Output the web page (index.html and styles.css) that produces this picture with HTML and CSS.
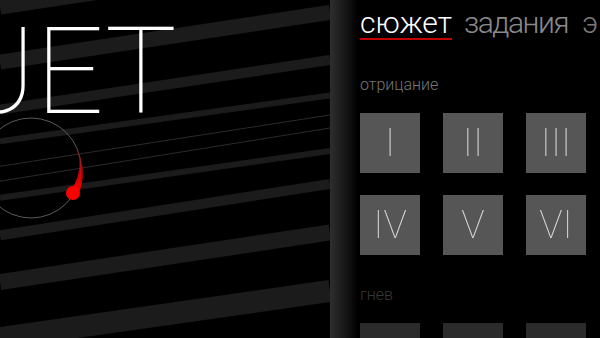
FILE: index.html
```html
<!DOCTYPE html>
<html lang="ru">
<head>
    <meta charset="UTF-8">
    <meta name="viewport" content="width=device-width, initial-scale=1.0">
    <title>Duet - меню</title>
    <link rel="stylesheet" href="styles.css">
</head>
<body>
    <div class="screen">
        <div class="scene">
            <svg class="backdrop" width="330" height="338" viewBox="0 0 330 338">
                <defs>
                    <linearGradient id="trail" gradientUnits="userSpaceOnUse" x1="0" y1="196" x2="0" y2="146">
                        <stop offset="0" stop-color="#ff0000"/>
                        <stop offset="0.5" stop-color="#e00000" stop-opacity="0.85"/>
                        <stop offset="1" stop-color="#800000" stop-opacity="0.2"/>
                    </linearGradient>
                </defs>
                <g stroke="#1b1b1b">
                    <line x1="0" y1="7" x2="330" y2="-42.5" stroke-width="15"/>
                    <line x1="0" y1="62" x2="330" y2="12.5" stroke-width="15"/>
                    <line x1="0" y1="109.5" x2="330" y2="60" stroke-width="10"/>
                    <line x1="0" y1="141.3" x2="330" y2="95.5" stroke-width="6"/>
                    <line x1="0" y1="197.8" x2="330" y2="151" stroke-width="6"/>
                    <line x1="0" y1="235.3" x2="330" y2="184" stroke-width="10"/>
                    <line x1="0" y1="282" x2="330" y2="232.5" stroke-width="16"/>
                    <line x1="0" y1="338" x2="330" y2="291" stroke-width="22"/>
                </g>
                <g stroke="#2a2a2a" stroke-width="1">
                    <line x1="0" y1="166.3" x2="330" y2="115"/>
                    <line x1="0" y1="181.2" x2="330" y2="128"/>
                </g>
                <circle cx="31" cy="168" r="50" fill="none" stroke="#5a5a5a" stroke-width="1"/>
                <path fill="url(#trail)" d="M77.7 196.1 L81.3 186.3 L82.7 177.1 L82.75 168 L81.2 159.1 L78.5 150.7 L76 146.1 L77.5 151.1 L79.3 159.5 L79.25 168 L77.8 176.3 L74.7 183.9 L70 191.4 Z"/>
                <circle cx="73" cy="193" r="7" fill="#ff0000"/>
            </svg>
            <div class="logo">DUET</div>
        </div>

        <div class="panel">
            <nav class="tabs">
                <span class="tab active">сюжет</span>
                <span class="tab">задания</span>
                <span class="tab">эндлесс</span>
            </nav>

            <section class="chapter">
                <div class="chapter-name">отрицание</div>
                <div class="levels">
                    <div class="level">I</div>
                    <div class="level">II</div>
                    <div class="level">III</div>
                    <div class="level">IV</div>
                    <div class="level">V</div>
                    <div class="level">VI</div>
                </div>
            </section>

            <section class="chapter locked">
                <div class="chapter-name">гнев</div>
                <div class="levels">
                    <div class="level"></div>
                    <div class="level"></div>
                    <div class="level"></div>
                </div>
            </section>
        </div>
    </div>
</body>
</html>
```

FILE: styles.css
```css
body {
    margin: 0;
    padding: 0;
    background-color: #000;
    font-family: Roboto, "Noto Sans", "Liberation Sans", sans-serif;
    overflow: hidden;
}

.screen {
    display: flex;
    width: 600px;
    height: 338px;
    overflow: hidden;
}

.scene {
    position: relative;
    width: 330px;
    height: 338px;
    flex-shrink: 0;
    overflow: hidden;
    background-color: #000;
}

.backdrop {
    position: absolute;
    left: 0;
    top: 0;
    display: block;
}

.logo {
    position: absolute;
    left: -123px;
    top: 12px;
    font-size: 120px;
    font-weight: 100;
    line-height: 120px;
    color: #fff;
    white-space: nowrap;
}

.panel {
    flex: 1;
    min-width: 0;
    padding-left: 30px;
    overflow: hidden;
    background: linear-gradient(to right, #2e2e2e 0, #1c1c1c 12px, #000 28px);
}

.tabs {
    display: flex;
    gap: 12px;
    padding-top: 8px;
    white-space: nowrap;
}

.tab {
    display: inline-block;
    font-size: 30px;
    font-weight: 300;
    line-height: 30px;
    letter-spacing: -1.5px;
    color: #8a8a8a;
    border-bottom: 2px solid transparent;
}

.tab:last-child {
    margin-left: 2px;
    letter-spacing: 2px;
    color: #7a7a7a;
}

.tab.active {
    letter-spacing: 0;
    color: #fff;
    border-bottom-color: #c40000;
}

.chapter-name {
    margin-top: 35px;
    margin-bottom: 18px;
    font-size: 16px;
    font-weight: 300;
    line-height: 20px;
    color: #787878;
}

.chapter + .chapter .chapter-name {
    margin-top: 30px;
}

.levels {
    display: grid;
    grid-template-columns: repeat(3, 60px);
    column-gap: 23px;
    row-gap: 22px;
}

.level {
    width: 60px;
    height: 60px;
    background-color: #565656;
    color: #d4d4d4;
    font-size: 39px;
    font-weight: 100;
    line-height: 60px;
    text-align: center;
    filter: grayscale(1);
}

.locked .chapter-name {
    color: #383838;
}

.locked .level {
    background-color: #2b2b2b;
}
```
